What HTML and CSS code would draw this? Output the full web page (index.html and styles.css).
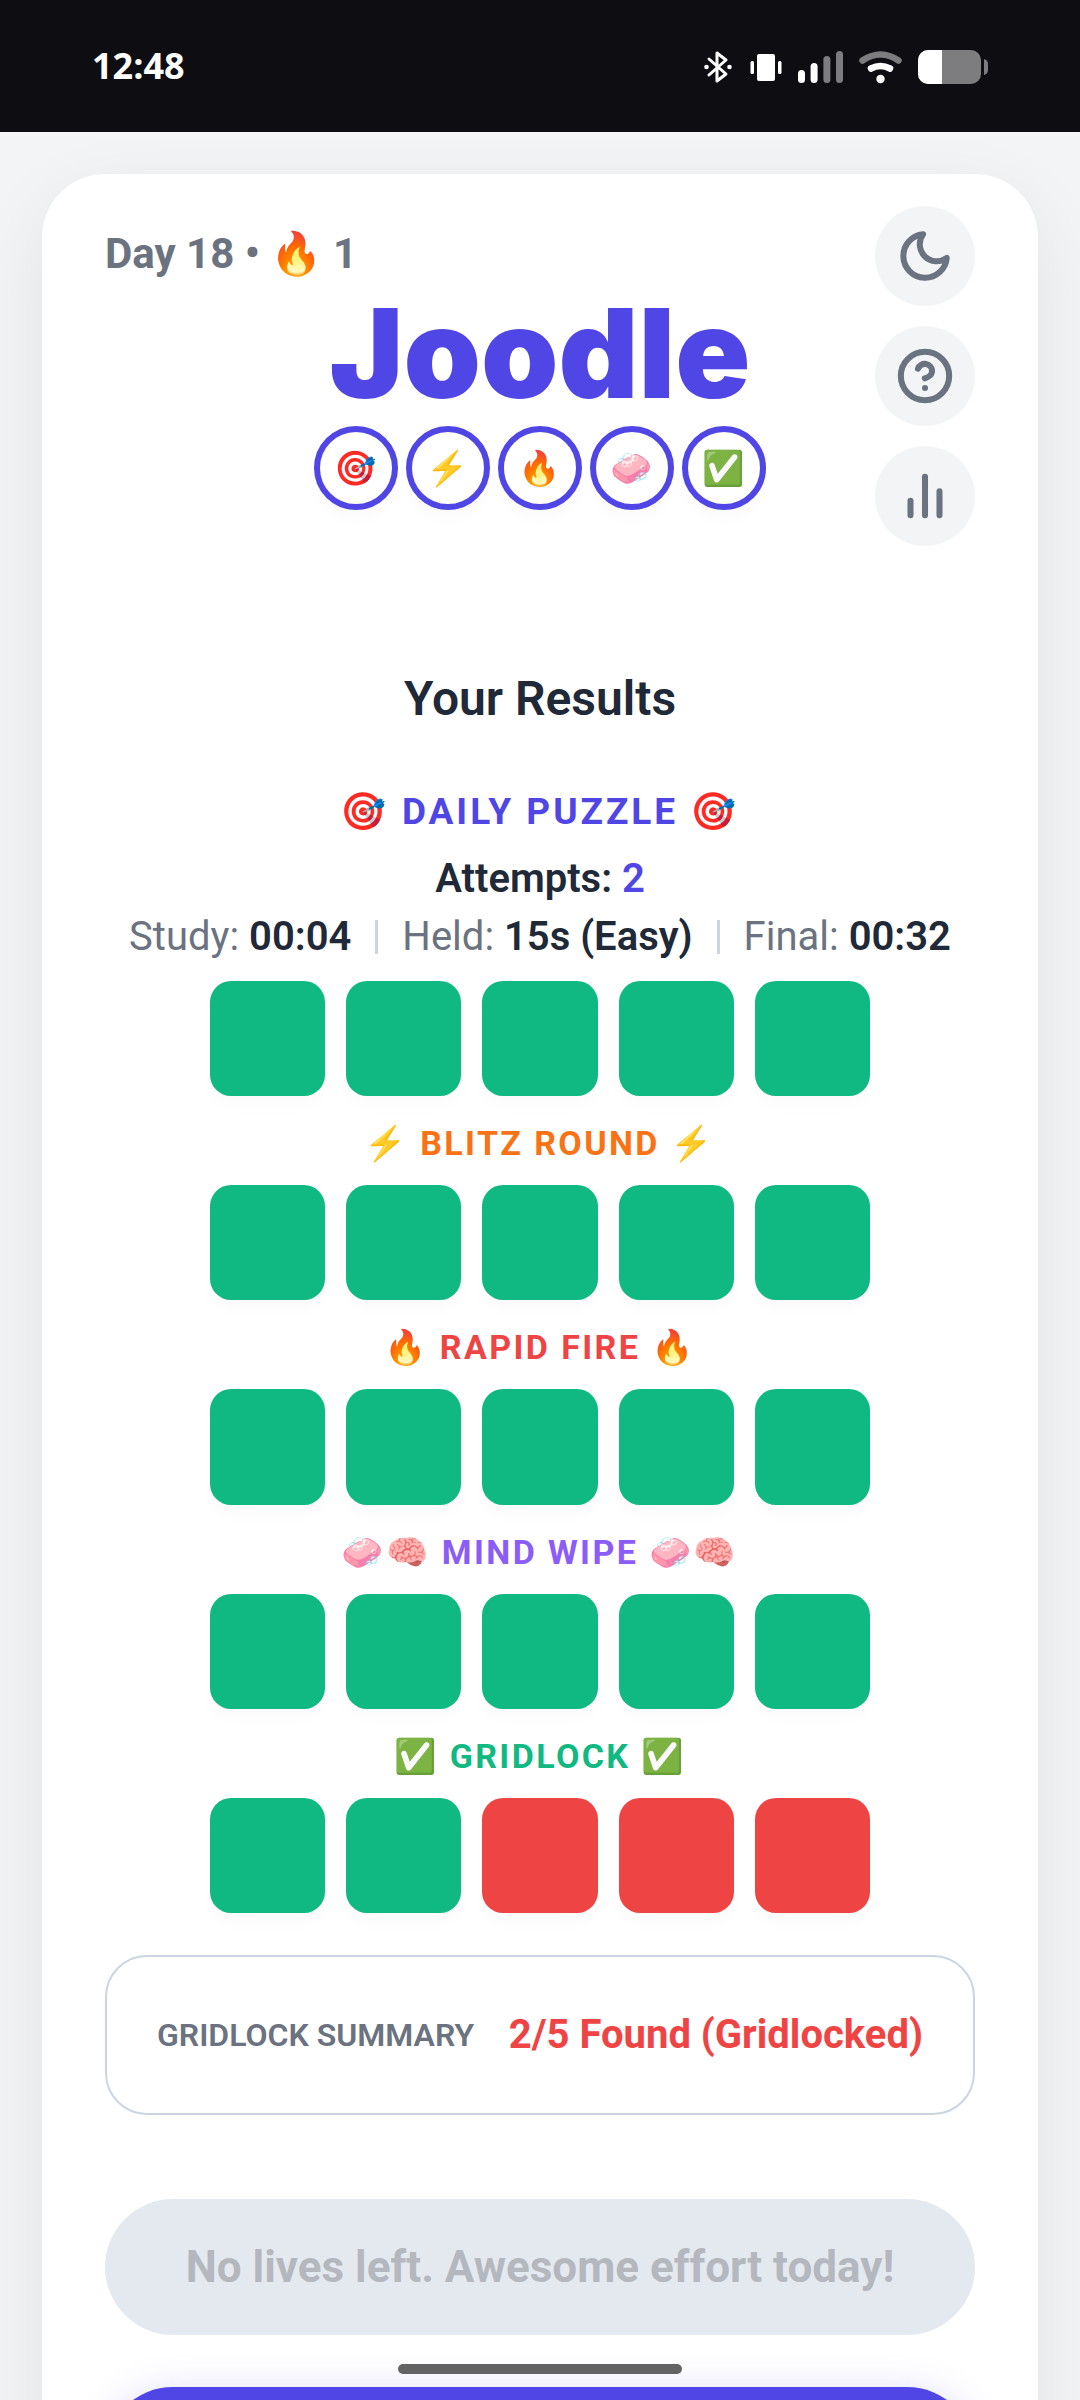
FILE: index.html
```html
<!DOCTYPE html>
<html lang="en">
<head>
    <meta charset="UTF-8">
    <meta name="viewport" content="width=device-width, initial-scale=1.0">
    <title>Joodle</title>
    <link rel="stylesheet" href="styles.css">
</head>
<body>
    <div class="status-bar">
        <span class="clock">12:48</span>
        <div class="status-icons">
            <svg width="30" height="34" viewBox="0 0 30 34" fill="none" stroke="#fff" stroke-width="3" stroke-linecap="round" stroke-linejoin="round">
                <path d="M5 9L22 24L13 31V3L22 10L5 25"/>
                <circle cx="2.5" cy="17" r="2.3" fill="#fff" stroke="none"/>
                <circle cx="25.5" cy="17" r="2.3" fill="#fff" stroke="none"/>
            </svg>
            <svg width="32" height="34" viewBox="0 0 32 34" fill="#fff">
                <rect x="7" y="4" width="18" height="27" rx="2"/>
                <rect x="0.5" y="11" width="3.5" height="13" rx="1.5"/>
                <rect x="28" y="11" width="3.5" height="13" rx="1.5"/>
            </svg>
            <svg width="45" height="34" viewBox="0 0 45 34" fill="#fff">
                <rect x="0" y="20" width="7" height="13" rx="3.5"/>
                <rect x="12.6" y="13" width="7" height="20" rx="3.5"/>
                <rect x="25.4" y="6" width="7" height="27" rx="3.5" fill="#7d7d80"/>
                <rect x="38" y="1" width="7" height="32" rx="3.5" fill="#7d7d80"/>
            </svg>
            <svg width="43" height="34" viewBox="0 0 43 34" fill="none" stroke-width="6.5" stroke-linecap="round">
                <path d="M3.5 10.5Q21.500 -1.500 39.500 10.5" stroke="#7d7d80"/>
                <path d="M12 18.500Q21.500 13.500 31 18.500" stroke="#fff"/>
                <circle cx="21.500" cy="29" r="4.2" fill="#fff"/>
            </svg>
            <svg width="70" height="34" viewBox="0 0 70 34">
                <rect width="63" height="34" rx="10" fill="#7d7d80"/>
                <path d="M24 0H10A10 10 0 0 0 0 10V24A10 10 0 0 0 10 34H24Z" fill="#fff"/>
                <path d="M66 9Q70 10 70 14V20Q70 24 66 25Z" fill="#7d7d80"/>
            </svg>
        </div>
    </div>

    <main class="card">
        <header class="header">
            <div class="day">Day 18 • 🔥 1</div>
            <h1>Joodle</h1>
            <div class="rounds">
                <span class="round">🎯</span>
                <span class="round">⚡</span>
                <span class="round">🔥</span>
                <span class="round">🧼</span>
                <span class="round">✅</span>
            </div>
            <nav class="tools">
                <button type="button" class="icon-btn" aria-label="Dark mode">
                    <svg viewBox="0 0 24 24"><path d="M21 12.790A9 9 0 1 1 11.210 3 7 7 0 0 0 21 12.790z"/></svg>
                </button>
                <button type="button" class="icon-btn" aria-label="Help">
                    <svg viewBox="0 0 24 24"><circle cx="12" cy="12" r="10"/><path d="M9.090 9a3 3 0 0 1 5.830 1c0 2-3 3-3 3M12 17h.01"/></svg>
                </button>
                <button type="button" class="icon-btn" aria-label="Stats">
                    <svg viewBox="0 0 24 24"><path d="M18 20V10M12 20V4M6 20v-6"/></svg>
                </button>
            </nav>
        </header>

        <section class="results">
            <h2>Your Results</h2>

            <h3 class="mode mode-daily">🎯 DAILY PUZZLE 🎯</h3>
            <p class="attempts">Attempts: <span>2</span></p>
            <p class="times">
                <span>Study: <b>00:04</b></span>
                <i class="divider"></i>
                <span>Held: <b>15s (Easy)</b></span>
                <i class="divider"></i>
                <span>Final: <b>00:32</b></span>
            </p>
            <div class="tiles tiles-daily">
                <div class="tile"></div><div class="tile"></div><div class="tile"></div><div class="tile"></div><div class="tile"></div>
            </div>

            <h3 class="mode mode-blitz">⚡ BLITZ ROUND ⚡</h3>
            <div class="tiles">
                <div class="tile"></div><div class="tile"></div><div class="tile"></div><div class="tile"></div><div class="tile"></div>
            </div>

            <h3 class="mode mode-rapid">🔥 RAPID FIRE 🔥</h3>
            <div class="tiles">
                <div class="tile"></div><div class="tile"></div><div class="tile"></div><div class="tile"></div><div class="tile"></div>
            </div>

            <h3 class="mode mode-wipe">🧼🧠 MIND WIPE 🧼🧠</h3>
            <div class="tiles">
                <div class="tile"></div><div class="tile"></div><div class="tile"></div><div class="tile"></div><div class="tile"></div>
            </div>

            <h3 class="mode mode-gridlock">✅ GRIDLOCK ✅</h3>
            <div class="tiles">
                <div class="tile"></div><div class="tile"></div><div class="tile miss"></div><div class="tile miss"></div><div class="tile miss"></div>
            </div>
        </section>

        <div class="summary">
            <span class="summary-label">GRIDLOCK SUMMARY</span>
            <span class="summary-value">2/5 Found (Gridlocked)</span>
        </div>

        <div class="actions">
            <button type="button" class="btn" disabled>No lives left. Awesome effort today!</button>
            <button type="button" class="btn btn-primary" aria-label="Share"></button>
        </div>
    </main>

    <div class="home-indicator"></div>
</body>
</html>
```
FILE: styles.css
```css
:root {
    --primary: #4f46e5;
    --green: #10b981;
    --red: #ef4444;
    --text: #1f2937;
    --muted: #6b7280;
    --line: #cbd5e1;
}

* {
    box-sizing: border-box;
}

body {
    margin: 0;
    height: 100vh;
    overflow: hidden;
    background: #f3f4f6;
    color: var(--text);
    font-family: Roboto, "Noto Color Emoji", sans-serif;
}

h1, h2, h3, p {
    margin: 0;
}

button {
    font-family: inherit;
    border: none;
    padding: 0;
}

/* phone status bar */
.status-bar {
    position: relative;
    z-index: 1;
    display: flex;
    align-items: center;
    justify-content: space-between;
    height: 132px;
    padding: 2px 92px 0;
    background: #0e0e12;
    color: #fff;
}

.clock {
    padding-bottom: 4px;
    font-family: "Open Sans", sans-serif;
    font-size: 36px;
    font-weight: 700;
}

.status-icons {
    display: flex;
    gap: 16px;
}

.card {
    margin: 42px 42px 0;
    padding: 32px 63px 63px;
    background: #fff;
    border-radius: 63px;
    box-shadow: 0 26px 78px rgba(0, 0, 0, 0.08);
}

/* header */
.header {
    display: grid;
    grid-template-columns: 100px 1fr 100px;
    grid-template-rows: auto auto 1fr;
    justify-items: center;
}

.day {
    grid-area: 1 / 1 / 2 / 3;
    justify-self: start;
    margin-top: 23px;
    font-size: 42px;
    line-height: 50px;
    font-weight: 700;
    color: var(--muted);
}

h1 {
    grid-area: 2 / 2;
    margin-top: 11px;
    font-family: Inter, sans-serif;
    font-size: 124px;
    line-height: 126px;
    font-weight: 900;
    font-optical-sizing: none;
    color: var(--primary);
}

.rounds {
    grid-area: 3 / 2;
    display: flex;
    gap: 8px;
    margin-top: 10px;
}

.round {
    display: flex;
    align-items: center;
    justify-content: center;
    width: 84px;
    height: 84px;
    border: 6px solid var(--primary);
    border-radius: 50%;
    background: #fff;
    font-size: 34px;
    box-shadow: 0 10px 16px rgba(0, 0, 0, 0.02);
}

.tools {
    grid-area: 1 / 3 / 4 / 4;
    display: flex;
    flex-direction: column;
    gap: 20px;
}

.icon-btn {
    display: flex;
    align-items: center;
    justify-content: center;
    width: 100px;
    height: 100px;
    border-radius: 50%;
    background: #f3f4f6;
    cursor: pointer;
}

.icon-btn svg {
    width: 58px;
    height: 58px;
    fill: none;
    stroke: var(--muted);
    stroke-width: 2.5;
    stroke-linecap: round;
    stroke-linejoin: round;
}

/* results */
.results {
    text-align: center;
}

h2 {
    margin-top: 124px;
    font-size: 48px;
    line-height: 58px;
    font-weight: 600;
}

.mode {
    margin: 25px 0 20px;
    font-size: 34px;
    line-height: 44px;
    font-weight: 700;
    letter-spacing: 0.07em;
}

.mode-daily {
    margin: 62px 0 16px;
    font-size: 37px;
    letter-spacing: 0.08em;
    color: var(--primary);
}

.mode-blitz { color: #f97316; }
.mode-rapid { color: var(--red); }
.mode-wipe { color: #8b5cf6; }
.mode-gridlock { color: var(--green); }

.attempts {
    font-size: 40px;
    line-height: 58px;
    font-weight: 600;
}

.attempts span {
    color: var(--primary);
}

.times {
    display: flex;
    align-items: center;
    justify-content: center;
    gap: 24px;
    font-size: 40px;
    line-height: 58px;
    color: var(--muted);
}

.times b {
    font-weight: 600;
    color: var(--text);
}

.divider {
    width: 3px;
    height: 34px;
    background: var(--line);
}

.tiles {
    display: grid;
    grid-template-columns: repeat(5, 1fr);
    gap: 21px;
    max-width: 660px;
    margin: 0 auto;
}

.tiles-daily {
    margin-top: 15px;
}

.tile {
    aspect-ratio: 1;
    border-radius: 21px;
    background: var(--green);
    box-shadow: 0 10px 16px rgba(0, 0, 0, 0.02);
}

.tile.miss {
    background: var(--red);
}

.summary {
    display: flex;
    align-items: center;
    justify-content: space-between;
    margin-top: 42px;
    padding: 50px;
    border: 2px solid var(--line);
    border-radius: 42px;
    line-height: 56px;
}

.summary-label {
    font-size: 32px;
    font-weight: 600;
    color: var(--muted);
}

.summary-value {
    font-size: 40px;
    font-weight: 700;
    color: var(--red);
}

.actions {
    display: flex;
    flex-direction: column;
    gap: 52px;
    margin-top: 84px;
}

.btn {
    min-height: 136px;
    border-radius: 68px;
    background: #e4e9f0;
    color: #b4b8be;
    font-size: 44px;
    font-weight: 700;
}

.btn-primary {
    background: var(--primary);
    color: #fff;
    box-shadow: 0 10px 42px rgba(79, 70, 229, 0.25);
}

.home-indicator {
    position: fixed;
    left: 50%;
    bottom: 26px;
    width: 284px;
    height: 10px;
    margin-left: -142px;
    border-radius: 5px;
    background: #636363;
}
```
